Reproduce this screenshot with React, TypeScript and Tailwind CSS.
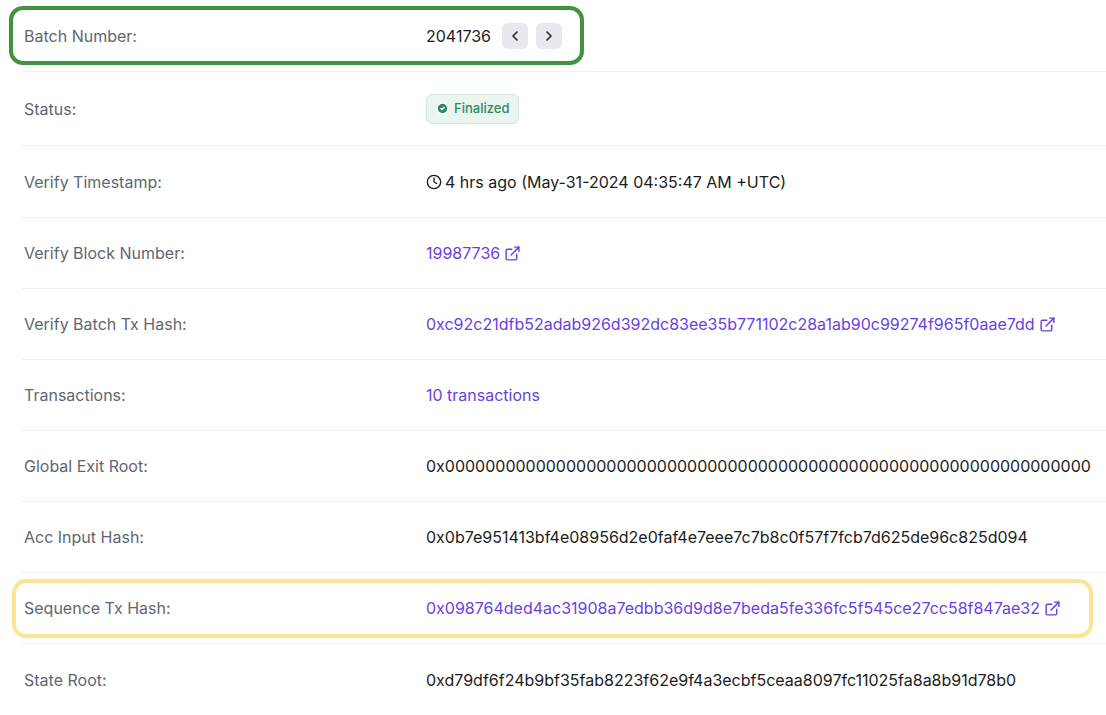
import { ChevronLeft, ChevronRight, Clock, ExternalLink, CircleCheck } from "lucide-react"

const link = "text-[#6a3fe0]"

function Ext() {
  return <ExternalLink className="ml-1 inline h-[17px] w-[17px] text-[#6a3fe0]" strokeWidth={2} />
}

function Row({ label, children, h = "h-[71px]" }: { label: string; children: React.ReactNode; h?: string }) {
  return (
    <div className={`flex items-center border-b border-[#eef0f2] ${h}`}>
      <div className="w-[404px] pl-[2px] text-[#5f6670]">{label}</div>
      <div className="flex items-center text-[#1b1d21]">{children}</div>
    </div>
  )
}

export default function App() {
  return (
    <div className="relative h-[715px] w-[1106px] overflow-hidden bg-white text-[16px]" style={{ fontFamily: "Inter, Roboto, 'Liberation Sans', sans-serif" }}>
      <div className="ml-[22px] pt-[1px]">
        <Row label="Batch Number:" h="h-[71px]">
          <span>2041736</span>
          <button className="ml-[11px] flex h-[26px] w-[26px] items-center justify-center rounded-md bg-[#e7e9ec] text-[#23262b]">
            <ChevronLeft className="h-4 w-4" strokeWidth={2.5} />
          </button>
          <button className="ml-[8px] flex h-[26px] w-[26px] items-center justify-center rounded-md bg-[#e7e9ec] text-[#23262b]">
            <ChevronRight className="h-4 w-4" strokeWidth={2.5} />
          </button>
        </Row>
        <Row label="Status:" h="h-[74px]">
          <span className="flex h-[30px] items-center gap-[5px] rounded-md border border-[#cfe6dc] bg-[#eaf5f0] px-[9px] text-[13px] font-medium text-[#2f8a64]">
            <CircleCheck className="h-[13px] w-[13px] fill-[#2f8a64] text-white" strokeWidth={2.5} />
            Finalized
          </span>
        </Row>
        <Row label="Verify Timestamp:" h="h-[72px]">
          <Clock className="mr-[3px] h-[16px] w-[16px]" strokeWidth={2} />
          4 hrs ago (May-31-2024 04:35:47 AM +UTC)
        </Row>
        <Row label="Verify Block Number:">
          <span className={link}>19987736</span>
          <Ext />
        </Row>
        <Row label="Verify Batch Tx Hash:">
          <span className={link}>0xc92c21dfb52adab926d392dc83ee35b771102c28a1ab90c99274f965f0aae7dd</span>
          <Ext />
        </Row>
        <Row label="Transactions:">
          <span className={link}>10 transactions</span>
        </Row>
        <Row label="Global Exit Root:">0x0000000000000000000000000000000000000000000000000000000000000000</Row>
        <Row label="Acc Input Hash:">0x0b7e951413bf4e08956d2e0faf4e7eee7c7b8c0f57f7fcb7d625de96c825d094</Row>
        <Row label="Sequence Tx Hash:">
          <span className={link}>0x098764ded4ac31908a7edbb36d9d8e7beda5fe336fc5f545ce27cc58f847ae32</span>
          <Ext />
        </Row>
        <div className="flex h-[71px] items-center">
          <div className="w-[404px] pl-[2px] text-[#5f6670]">State Root:</div>
          <div className="text-[#1b1d21]">0xd79df6f24b9bf35fab8223f62e9f4a3ecbf5ceaa8097fc11025fa8a8b91d78b0</div>
        </div>
      </div>
      <div className="pointer-events-none absolute left-[9px] top-[6px] h-[59px] w-[575px] rounded-[14px] border-[4px] border-[#43923f]" />
      <div className="pointer-events-none absolute left-[12px] top-[579px] h-[59px] w-[1081px] rounded-[14px] border-[4px] border-[#fbe596]" />
    </div>
  )
}
